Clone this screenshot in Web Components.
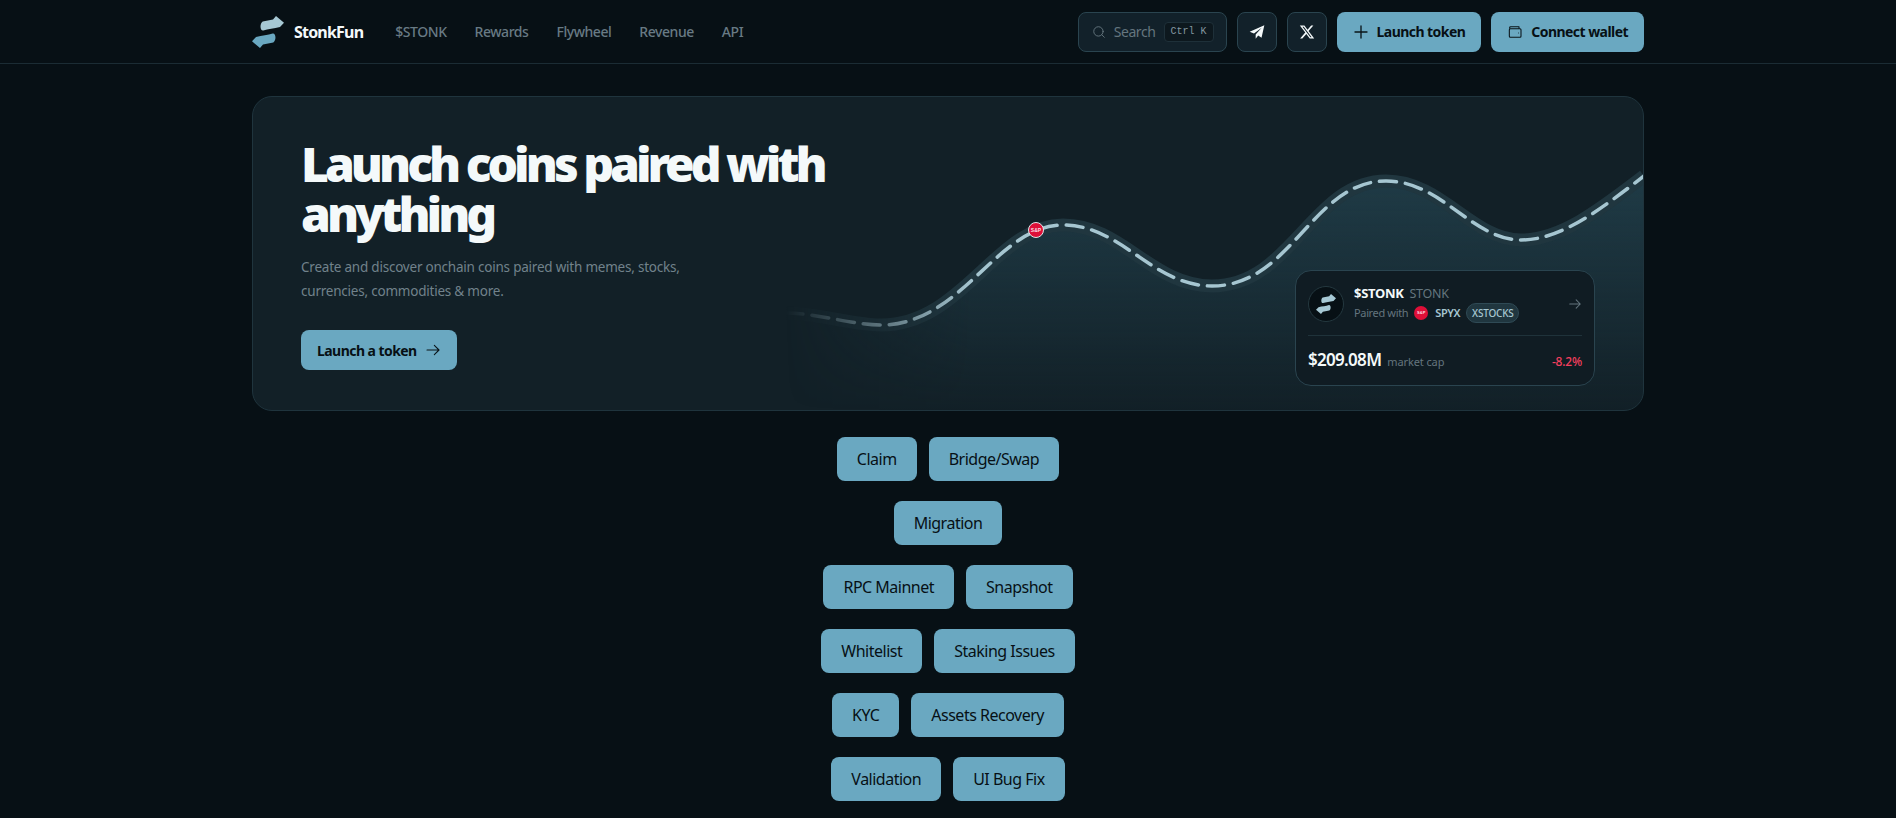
<!DOCTYPE html>
<html lang="en">
<head>
<meta charset="utf-8">
<title>StonkFun</title>
<style>
  html, body { margin: 0; height: 100%; background: #071015; overflow: hidden; }
  body { font-family: "Noto Sans", "Open Sans", sans-serif; color: #f4f9fa; }
</style>
</head>
<body>
<stonk-page>
  <stonk-nav></stonk-nav>
  <stonk-hero></stonk-hero>
  <chip-row><stonk-chip>Claim</stonk-chip><stonk-chip>Bridge/Swap</stonk-chip></chip-row>
  <chip-row><stonk-chip>Migration</stonk-chip></chip-row>
  <chip-row><stonk-chip>RPC Mainnet</stonk-chip><stonk-chip>Snapshot</stonk-chip></chip-row>
  <chip-row><stonk-chip>Whitelist</stonk-chip><stonk-chip>Staking Issues</stonk-chip></chip-row>
  <chip-row><stonk-chip>KYC</stonk-chip><stonk-chip>Assets Recovery</stonk-chip></chip-row>
  <chip-row><stonk-chip>Validation</stonk-chip><stonk-chip>UI Bug Fix</stonk-chip></chip-row>
</stonk-page>

<script>
"use strict";
const LOGO_TOP = "M10.700 5.500L21 3.500L24 0L32 6.700L28 11C22 12.500 16 12.800 11.300 14.500C8 15 7.500 7.500 10.700 5.500Z";
const LOGO_BOTTOM = "M21.300 26.500L11 28.500L8 32L0 25.300L4 21C10 19.500 16 19.200 20.700 17.500C24 17 24.500 24.500 21.300 26.500Z";
const CURVE = "M534 217C565 217 600 229 629 229C710 229 745 129 811 129C870 129 900 190 960 190C1040 190 1060 85 1134 85C1190 85 1220 144 1269 144C1310 144 1350 112 1392 80";

class StonkPage extends HTMLElement {
    constructor() {
        super();
        this.attachShadow({ mode: "open" }).innerHTML = `
<style>
  :host { display: block; }
  .main { display: flex; flex-direction: column; gap: 20px; width: 1392px; margin: 32px auto 0; }
</style>
<slot name="top"></slot>
<div class="main"><slot></slot></div>`;
    }
    connectedCallback() {
        const nav = this.querySelector("stonk-nav");
        if (nav) nav.slot = "top";
    }
}

class StonkNav extends HTMLElement {
    constructor() {
        super();
        this.attachShadow({ mode: "open" }).innerHTML = `
<style>
  :host { display: block; height: 63px; border-bottom: 1px solid #1b2c34; }
  .bar { width: 1392px; height: 63px; margin: 0 auto; display: flex; align-items: center; justify-content: space-between; }
  .left, .right { display: flex; align-items: center; }
  .right { gap: 10px; }
  .brand { display: flex; align-items: center; gap: 10px; font-size: 16px; font-weight: 700; letter-spacing: -0.8px; color: #f4f9fa; }
  .links { display: flex; gap: 28px; margin-left: 32px; font-size: 14px; font-weight: 500; color: #687a84; letter-spacing: -0.45px; }
  .search { box-sizing: border-box; width: 149px; height: 40px; display: flex; align-items: center; gap: 8px; padding: 0 12px 0 13px; border: 1px solid #2a444f; border-radius: 8px; background: #12212a; color: #64757e; font-size: 14px; letter-spacing: -0.4px; }
  .kbd { box-sizing: border-box; height: 20px; padding: 0 6px; display: flex; align-items: center; border: 1px solid #1e3039; border-radius: 4px; background: #0d181e; font: 10px "Liberation Mono", monospace; letter-spacing: 0; color: #8497a0; white-space: nowrap; }
  .icon { box-sizing: border-box; width: 40px; height: 40px; display: flex; align-items: center; justify-content: center; border: 1px solid #2a444f; border-radius: 8px; background: #12212a; }
</style>
<div class="bar">
  <div class="left">
    <div class="brand">
      <svg width="32" height="32" viewBox="0 0 32 32"><path d="${LOGO_TOP}" fill="#a6c8d4"/><path d="${LOGO_BOTTOM}" fill="#6aa8c1"/></svg>
      StonkFun
    </div>
    <div class="links"><span>$STONK</span><span>Rewards</span><span>Flywheel</span><span>Revenue</span><span>API</span></div>
  </div>
  <div class="right">
    <div class="search">
      <svg width="16" height="16" viewBox="0 0 24 24" fill="none" stroke="#64757e" stroke-width="1.600" stroke-linecap="round"><circle cx="11" cy="11" r="8"/><path d="m21 21-4.300-4.300"/></svg>
      <span>Search</span><span class="kbd">Ctrl K</span>
    </div>
    <div class="icon"><svg width="16" height="16" viewBox="0 0 24 24" fill="#f4f9fa"><path d="M23 2 1 11.500l6.500 2.600L19 5.500 10 15.800V22l3.800-4.600 5 3.300z"/></svg></div>
    <div class="icon"><svg width="16" height="16" viewBox="0 0 24 24" fill="#f4f9fa"><path d="M18.244 2.250h3.308l-7.227 8.260 8.502 11.240H16.170l-5.214-6.817L4.990 21.750H1.680l7.730-8.835L1.254 2.250H8.080l4.713 6.231zm-1.161 17.520h1.833L7.084 4.126H5.117z"/></svg></div>
    <stonk-button>
      <svg slot="before" width="16" height="16" viewBox="0 0 24 24" fill="none" stroke="#0a1419" stroke-width="2" stroke-linecap="round"><path d="M12 3v18M3 12h18"/></svg>
      Launch token
    </stonk-button>
    <stonk-button>
      <svg slot="before" width="16" height="16" viewBox="0 0 24 24" fill="none" stroke="#0a1419" stroke-width="1.600" stroke-linejoin="round"><path d="M4 7V5.500A1.500 1.500 0 0 1 5.500 4H18v3"/><rect x="3.500" y="7" width="17.500" height="13" rx="1.500"/><path d="M17 13.500h1"/></svg>
      Connect wallet
    </stonk-button>
  </div>
</div>`;
    }
}

class StonkButton extends HTMLElement {
    constructor() {
        super();
        this.attachShadow({ mode: "open" }).innerHTML = `
<style>
  :host { display: inline-flex; box-sizing: border-box; height: 40px; align-items: center; gap: 8px; padding: 0 16px; border-radius: 8px; background: #6aa8c1; color: #071015; font-size: 14px; font-weight: 700; letter-spacing: -0.55px; white-space: nowrap; }
  ::slotted(svg) { display: block; flex: none; }
</style>
<slot name="before"></slot><slot></slot><slot name="after"></slot>`;
    }
}

class StonkHero extends HTMLElement {
    constructor() {
        super();
        this.attachShadow({ mode: "open" }).innerHTML = `
<style>
  :host { display: block; position: relative; box-sizing: border-box; height: 315px; margin-bottom: 6px; padding: 42px 48px; border: 1px solid #1f343d; border-radius: 20px; background: #122027; overflow: hidden; }
  .chart { position: absolute; left: -1px; top: -1px; width: 1392px; height: 315px; }
  .copy { position: relative; width: 600px; }
  h1 { margin: 0; font-size: 48px; line-height: 50px; font-weight: 900; letter-spacing: -4px; color: #f4f9fa; }
  p { margin: 16px 0 0; font-size: 13.500px; line-height: 24px; color: #71828b; width: 400px; letter-spacing: -0.22px; }
  stonk-button { margin-top: 27px; }
  token-card { position: absolute; right: 48px; bottom: 24px; }
</style>
<svg class="chart" viewBox="0 0 1392 315">
  <defs>
    <linearGradient id="area" x1="0" y1="0" x2="0" y2="1">
      <stop offset="0" stop-color="#22404c" stop-opacity=".85"/>
      <stop offset="1" stop-color="#22404c" stop-opacity="0"/>
    </linearGradient>
    <linearGradient id="fade" gradientUnits="userSpaceOnUse" x1="534" y1="0" x2="720" y2="0">
      <stop offset="0" stop-color="#fff" stop-opacity="0"/>
      <stop offset="1" stop-color="#fff"/>
    </linearGradient>
    <mask id="fadeMask" maskUnits="userSpaceOnUse" x="0" y="0" width="1392" height="315"><rect width="1392" height="315" fill="url(#fade)"/></mask>
  </defs>
  <g mask="url(#fadeMask)">
    <path d="${CURVE}V315H534Z" fill="url(#area)"/>
    <path d="${CURVE}" fill="none" stroke="#20363f" stroke-width="13"/>
    <path d="${CURVE}" fill="none" stroke="#a6c6d1" stroke-width="3.500" stroke-dasharray="17 9" stroke-linecap="round"/>
  </g>
  <circle cx="784" cy="134" r="7.500" fill="#df0f38" stroke="#dfe8ea" stroke-width="1"/>
  <text x="784" y="136" text-anchor="middle" font-size="5" font-weight="700" fill="#fbdde3" font-family="Liberation Sans">S&amp;P</text>
</svg>
<div class="copy">
  <h1>Launch coins paired with anything</h1>
  <p>Create and discover onchain coins paired with memes, stocks, currencies, commodities &amp; more.</p>
  <stonk-button>Launch a token
    <svg slot="after" width="16" height="16" viewBox="0 0 24 24" fill="none" stroke="#0a1419" stroke-width="1.600" stroke-linecap="round" stroke-linejoin="round"><path d="M3 12h18M14 5l7 7-7 7"/></svg>
  </stonk-button>
</div>
<token-card></token-card>`;
    }
}

class TokenCard extends HTMLElement {
    constructor() {
        super();
        this.attachShadow({ mode: "open" }).innerHTML = `
<style>
  :host { display: block; box-sizing: border-box; width: 300px; height: 116px; padding: 15px 12px 0; border: 1px solid #2a444f; border-radius: 16px; background: #101c23; }
  .top { display: flex; align-items: center; gap: 10px; height: 36px; }
  .avatar { box-sizing: border-box; width: 36px; height: 36px; border-radius: 50%; border: 1px solid #24383f; background: #071015; display: flex; align-items: center; justify-content: center; flex: none; }
  .info { flex: 1; }
  .name { display: flex; align-items: baseline; gap: 6px; font-size: 13px; font-weight: 700; color: #f4f9fa; letter-spacing: -0.3px; line-height: 17px; }
  .name span { font-weight: 400; font-size: 12.500px; color: #64757e; }
  .pair { display: flex; align-items: center; font-size: 11px; color: #64757e; letter-spacing: -0.35px; height: 22px; }
  .sp { width: 14px; height: 14px; border-radius: 50%; background: #df0f38; color: #fbdde3; font: 700 4px/14px "Liberation Sans", sans-serif; letter-spacing: 0; text-align: center; margin: 0 7px 0 6px; }
  .sym { font-weight: 600; color: #a6c6d1; margin-right: 6px; }
  .tag { height: 20px; width: 53px; box-sizing: border-box; display: flex; align-items: center; justify-content: center; border: 1px solid #2f4a55; border-radius: 10px; background: #20363f; color: #a6c6d1; font-size: 10px; font-weight: 500; letter-spacing: -0.2px; }
  hr { margin: 13px 0 0; border: 0; border-top: 1px solid #1f323a; }
  .bottom { display: flex; align-items: baseline; gap: 6px; margin-top: 12px; }
  .cap { font-size: 17px; font-weight: 600; color: #f4f9fa; letter-spacing: -0.7px; line-height: 24px; }
  .label { flex: 1; font-size: 11px; color: #64757e; letter-spacing: -0.1px; }
  .pct { font-size: 12px; color: #f43f5e; font-weight: 500; letter-spacing: -0.2px; }
</style>
<div class="top">
  <div class="avatar"><svg width="20" height="20" viewBox="0 0 32 32"><path d="${LOGO_TOP}" fill="#a6c8d4"/><path d="${LOGO_BOTTOM}" fill="#a6c8d4"/></svg></div>
  <div class="info">
    <div class="name">$STONK <span>STONK</span></div>
    <div class="pair">Paired with <span class="sp">S&amp;P</span><span class="sym">SPYX</span><span class="tag">XSTOCKS</span></div>
  </div>
  <svg width="14" height="14" viewBox="0 0 24 24" fill="none" stroke="#64757e" stroke-width="1.800" stroke-linecap="round" stroke-linejoin="round"><path d="M3 12h18M14 5l7 7-7 7"/></svg>
</div>
<hr>
<div class="bottom"><span class="cap">$209.08M</span><span class="label">market cap</span><span class="pct">-8.2%</span></div>`;
    }
}

class ChipRow extends HTMLElement {
    constructor() {
        super();
        this.attachShadow({ mode: "open" }).innerHTML = `
<style>
  :host { display: flex; justify-content: center; gap: 12px; }
</style>
<slot></slot>`;
    }
}

class StonkChip extends HTMLElement {
    constructor() {
        super();
        this.attachShadow({ mode: "open" }).innerHTML = `
<style>
  :host { display: inline-flex; box-sizing: border-box; height: 44px; align-items: center; padding: 0 20px; border-radius: 8px; background: #6aa8c1; color: #071015; font-size: 16px; letter-spacing: -0.5px; white-space: nowrap; }
</style>
<slot></slot>`;
    }
}

customElements.define("stonk-button", StonkButton);
customElements.define("token-card", TokenCard);
customElements.define("stonk-nav", StonkNav);
customElements.define("stonk-hero", StonkHero);
customElements.define("chip-row", ChipRow);
customElements.define("stonk-chip", StonkChip);
customElements.define("stonk-page", StonkPage);
</script>
</body>
</html>
